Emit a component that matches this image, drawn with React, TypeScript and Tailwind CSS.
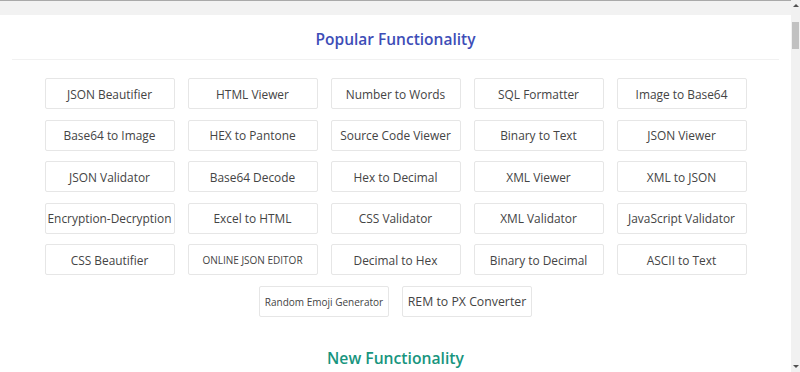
import React from 'react';

const popular: { label: string; size?: string }[] = [
  { label: 'JSON Beautifier' },
  { label: 'HTML Viewer' },
  { label: 'Number to Words' },
  { label: 'SQL Formatter' },
  { label: 'Image to Base64' },
  { label: 'Base64 to Image' },
  { label: 'HEX to Pantone' },
  { label: 'Source Code Viewer' },
  { label: 'Binary to Text' },
  { label: 'JSON Viewer' },
  { label: 'JSON Validator' },
  { label: 'Base64 Decode' },
  { label: 'Hex to Decimal' },
  { label: 'XML Viewer' },
  { label: 'XML to JSON' },
  { label: 'Encryption-Decryption' },
  { label: 'Excel to HTML' },
  { label: 'CSS Validator' },
  { label: 'XML Validator' },
  { label: 'JavaScript Validator' },
  { label: 'CSS Beautifier' },
  { label: 'ONLINE JSON EDITOR', size: 'text-[10px]' },
  { label: 'Decimal to Hex' },
  { label: 'Binary to Decimal' },
  { label: 'ASCII to Text' },
  { label: 'Random Emoji Generator', size: 'text-[10px]' },
  { label: 'REM to PX Converter', size: 'text-[12.3px] text-[#333]' },
];

export default function App() {
  return (
    <div
      className="flex h-[372px] w-[800px] overflow-hidden bg-white"
      style={{ fontFamily: '"Open Sans", "Noto Sans", sans-serif' }}
    >
      <div className="flex flex-1 flex-col">
        <div className="h-[15px] border-t border-[#a9a9a9] bg-[#f2f2f2]" />
        <div className="px-3">
          <h2 className="pt-[12px] text-center text-[15.5px] font-semibold leading-[24px] text-[#3d4db7]">
            Popular Functionality
          </h2>
          <div className="mt-[8px] border-b border-[#f1f1f1]" />
          <div className="mx-auto mt-[18px] flex w-[702px] flex-wrap justify-center gap-x-[13px] gap-y-[10.6px]">
            {popular.map((item) => (
              <div
                key={item.label}
                className={`flex h-[31px] w-[130px] items-center justify-center whitespace-nowrap rounded-[2px] border border-[#e6e6e6] pt-[2px] text-[#444] ${item.size ?? 'text-[11.9px]'}`}
              >
                {item.label}
              </div>
            ))}
          </div>
          <h2 className="mt-[29px] text-center text-[15.7px] font-semibold leading-[24px] text-[#18957e]">
            New Functionality
          </h2>
        </div>
      </div>
      <div className="flex w-[9px] flex-col items-center bg-[#f1f1f1]">
        <div className="mt-[4px] h-0 w-0 border-x-[3px] border-b-[3px] border-x-transparent border-b-[#505050]" />
        <div className="mt-[15px] h-[27px] w-[7px] bg-[#c1c1c1]" />
        <div className="mt-auto mb-[4px] h-0 w-0 border-x-[3px] border-t-[3px] border-x-transparent border-t-[#505050]" />
      </div>
    </div>
  );
}
